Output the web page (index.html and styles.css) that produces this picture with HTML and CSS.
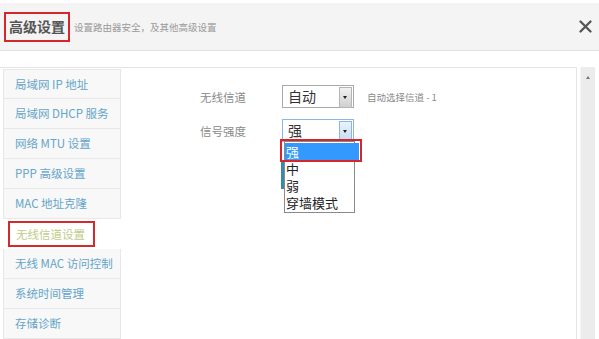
FILE: index.html
```html
<!DOCTYPE html>
<html>
<head>
    <title>高级设置</title>
    <link rel="stylesheet" href="styles.css">
</head>
<body>
    <div class="header">
        <h1 class="title">高级设置</h1>
        <span class="subtitle">设置路由器安全，及其他高级设置</span>
        <svg class="close" width="13" height="13" viewBox="0 0 13 13">
            <path d="M1.5 1.5 L11.5 11.5 M11.5 1.5 L1.5 11.5" stroke="#555" stroke-width="2.3" stroke-linecap="round"/>
        </svg>
    </div>

    <div class="content">
        <div class="panel">
            <ul class="nav">
                <li>局域网 IP 地址</li>
                <li>局域网 DHCP 服务</li>
                <li>网络 MTU 设置</li>
                <li>PPP 高级设置</li>
                <li>MAC 地址克隆</li>
                <li class="active"><span>无线信道设置</span></li>
                <li>无线 MAC 访问控制</li>
                <li>系统时间管理</li>
                <li>存储诊断</li>
            </ul>

            <div class="main">
                <div class="row">
                    <label class="label">无线信道</label>
                    <div class="select">
                        <span class="value">自动</span>
                        <span class="arrow"></span>
                    </div>
                    <span class="hint">自动选择信道 - 1</span>
                </div>
                <div class="row">
                    <label class="label">信号强度</label>
                    <div class="select open">
                        <span class="value">强</span>
                        <span class="arrow"></span>
                        <span class="behind"></span>
                        <ul class="options">
                            <li class="hl">强</li>
                            <li>中</li>
                            <li>弱</li>
                            <li>穿墙模式</li>
                        </ul>
                        <span class="mark"></span>
                    </div>
                </div>
            </div>
        </div>
        <div class="scrollbar">
            <span class="up"></span>
        </div>
    </div>
</body>
</html>
```

FILE: styles.css
```css
body {
    margin: 0;
    width: 599px;
    height: 339px;
    overflow: hidden;
    background: #fff;
    font-family: "Noto Sans CJK SC", "Noto Sans", sans-serif;
}
.header {
    margin-top: 3px;
    height: 47px;
    background: #f4f4f4;
    border-bottom: 1px solid #e2e2e2;
    display: flex;
    align-items: center;
    padding: 0 7px 0 4px;
}
.title {
    margin: 0;
    height: 30px;
    box-sizing: border-box;
    border: 2px solid #d7262b;
    padding: 0 3px;
    font-size: 14px;
    font-weight: bold;
    line-height: 25px;
    color: #555;
}
.subtitle {
    margin-left: 4px;
    font-size: 9.5px;
    color: #9a9a9a;
}
.close {
    margin-left: auto;
}
.content {
    display: flex;
    margin-top: 16px;
    height: 272px;
}
.panel {
    width: 577px;
    border-top: 1px solid #e4e4e4;
    border-right: 1px solid #e4e4e4;
    display: flex;
    padding: 1px 0 0 3px;
    box-sizing: border-box;
}
.nav {
    list-style: none;
    margin: 0;
    padding: 0;
    width: 118px;
}
.nav li {
    height: 29px;
    line-height: 29px;
    padding-left: 11px;
    background: #f8f8f8;
    border: 1px solid #e8e8e8;
    border-top: none;
    font-size: 11.5px;
    color: #64a5ca;
    white-space: nowrap;
}
.nav li:first-child {
    border-top: 1px solid #e8e8e8;
    height: 28px;
}
.nav li.active {
    background: #fff;
    border-color: #fff;
    padding-left: 4px;
    display: flex;
    align-items: center;
}
.nav li.active span {
    border: 2px solid #d42a2e;
    height: 26px;
    box-sizing: border-box;
    line-height: 22px;
    padding: 0 8px 0 6px;
    color: #bfcc88;
}
.main {
    padding: 16px 0 0 79px;
}
.row {
    display: flex;
    align-items: center;
    margin-bottom: 11px;
}
.label {
    width: 82px;
    font-size: 11.5px;
    color: #8a8a8a;
}
.select {
    position: relative;
    width: 72px;
    height: 23px;
    box-sizing: border-box;
    border: 1px solid #a9a9a9;
    font-size: 14px;
    line-height: 21px;
    color: #333;
    background: #fff;
}
.value {
    padding-left: 5px;
}
.arrow {
    position: absolute;
    right: 1px;
    top: 1px;
    width: 11px;
    height: 19px;
    border: 1px solid #b5b5b5;
    background: linear-gradient(#f2f2f2, #cfcfcf);
    box-sizing: content-box;
}
.arrow::after {
    content: "";
    position: absolute;
    left: 3px;
    top: 8px;
    border-left: 2.5px solid transparent;
    border-right: 2.5px solid transparent;
    border-top: 3px solid #222;
}
.hint {
    margin-left: 13px;
    font-size: 9.5px;
    color: #888;
}
.select.open {
    border-color: #8db7e2;
}
.select.open .arrow {
    border-color: #8fb5dd;
    background: linear-gradient(#eaf3fc, #c4dcf3);
}
.behind {
    position: absolute;
    left: -2px;
    top: 40px;
    width: 3px;
    height: 29px;
    background: #3a8aa6;
}
.options {
    position: absolute;
    left: 1px;
    top: 21px;
    width: 69px;
    margin: 0;
    padding: 1px 0;
    list-style: none;
    border: 1px solid #8a8a8a;
    background: #fff;
    font-size: 13px;
    line-height: 17px;
    color: #222;
}
.options li {
    height: 17px;
    padding-left: 1px;
}
.options li.hl {
    background: #3399ff;
    color: #fff;
    margin-right: -5px;
}
.mark {
    position: absolute;
    left: -3px;
    top: 19px;
    width: 82px;
    height: 23px;
    box-sizing: border-box;
    border: 2px solid #d8242a;
}
.scrollbar {
    position: relative;
    margin-left: 3px;
    width: 14px;
    background: #ececec;
    border-left: 1px solid #f4f4f4;
}
.up {
    position: absolute;
    left: 5px;
    top: 9px;
    border-left: 2.5px solid transparent;
    border-right: 2.5px solid transparent;
    border-bottom: 3px solid #777;
}
```
